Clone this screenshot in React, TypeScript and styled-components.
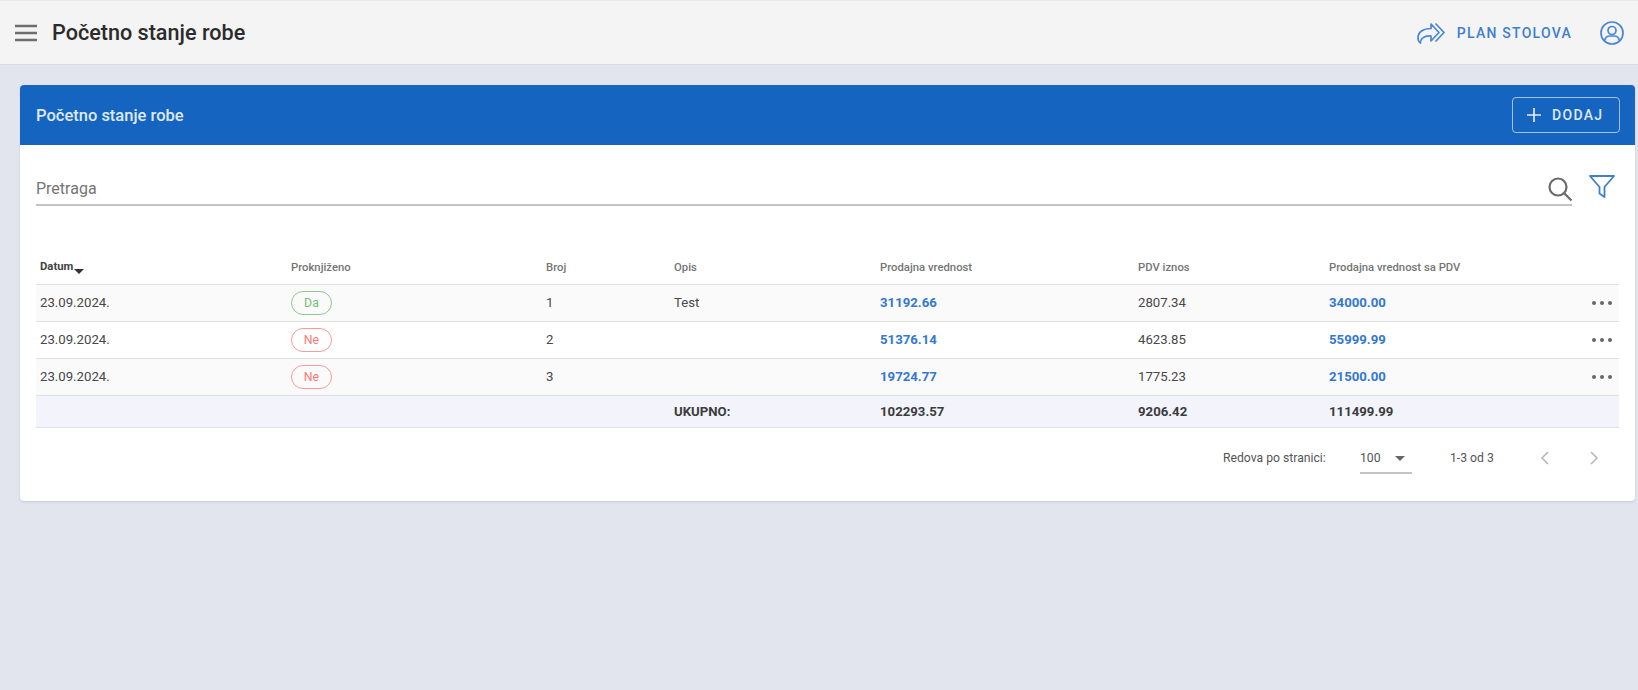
import styled, { createGlobalStyle } from "styled-components";

const GlobalStyle = createGlobalStyle`
  html, body {
    margin: 0;
    padding: 0;
    background: #e2e5ee;
    font-family: Roboto, "Liberation Sans", sans-serif;
  }
  * {
    box-sizing: border-box;
  }
`;

const rows = [
  { date: "23.09.2024.", booked: true, no: "1", desc: "Test", net: "31192.66", vat: "2807.34", gross: "34000.00" },
  { date: "23.09.2024.", booked: false, no: "2", desc: "", net: "51376.14", vat: "4623.85", gross: "55999.99" },
  { date: "23.09.2024.", booked: false, no: "3", desc: "", net: "19724.77", vat: "1775.23", gross: "21500.00" },
];

const columnWidths = [251, 255, 128, 206, 258, 191, 250, 44];

const App = () => {
  return (
    <>
      <GlobalStyle />
      <Page>
        <TopBar>
          <TopLeft>
            <MenuIcon viewBox="0 0 22 18">
              <path d="M0 2h22M0 9h22M0 16h22" />
            </MenuIcon>
            <PageTitle>Početno stanje robe</PageTitle>
          </TopLeft>
          <TopRight>
            <PlanLink>
              <svg width="28" height="22" viewBox="0 0 28 22" fill="none" stroke="#4a86d4" strokeWidth="1.7" strokeLinejoin="round" strokeLinecap="round">
                <path d="M14 2v4.500C6 6.500 1 10 1 16c0 2 1 4 2.500 5-.5-4 3-7.500 10.500-7v5l8-8.500z" />
                <path d="M19 2l8 8.500-8 8.500" />
              </svg>
              <PlanText>PLAN STOLOVA</PlanText>
            </PlanLink>
            <svg width="24" height="24" viewBox="0 0 24 24" fill="none" stroke="#4a86d4" strokeWidth="1.7">
              <circle cx="12" cy="12" r="11" />
              <circle cx="12" cy="9.500" r="4" />
              <path d="M4.500 20c.5-3.500 3-5 5.500-5h4c2.500 0 5 1.500 5.500 5" />
            </svg>
          </TopRight>
        </TopBar>
        <Content>
          <Card>
            <CardHeader>
              <CardTitle>Početno stanje robe</CardTitle>
              <AddButton>
                <svg width="14" height="14" viewBox="0 0 14 14" stroke="#e3ecf8" strokeWidth="1.700">
                  <path d="M7 0v14M0 7h14" />
                </svg>
                DODAJ
              </AddButton>
            </CardHeader>
            <CardBody>
              <SearchRow>
                <SearchField>
                  <SearchPlaceholder>Pretraga</SearchPlaceholder>
                  <SearchIcon viewBox="0 0 24 24">
                    <circle cx="10" cy="10" r="8.500" />
                    <path d="M16 16l7.500 7.500" />
                  </SearchIcon>
                </SearchField>
                <FilterIcon viewBox="0 0 26 26">
                  <path d="M1 2h24l-9.500 11v10l-5-3.500V13z" />
                </FilterIcon>
              </SearchRow>
              <Table>
                <colgroup>
                  {columnWidths.map((width, i) => (
                    <col key={i} width={width} />
                  ))}
                </colgroup>
                <thead>
                  <tr>
                    <HeadCell $active>
                      Datum
                      <SortArrow />
                    </HeadCell>
                    <HeadCell>Proknjiženo</HeadCell>
                    <HeadCell>Broj</HeadCell>
                    <HeadCell>Opis</HeadCell>
                    <HeadCell>Prodajna vrednost</HeadCell>
                    <HeadCell>PDV iznos</HeadCell>
                    <HeadCell>Prodajna vrednost sa PDV</HeadCell>
                    <HeadCell />
                  </tr>
                </thead>
                <tbody>
                  {rows.map((row) => (
                    <BodyRow key={row.no}>
                      <Cell>{row.date}</Cell>
                      <Cell>
                        <StatusPill $ok={row.booked}>{row.booked ? "Da" : "Ne"}</StatusPill>
                      </Cell>
                      <Cell>{row.no}</Cell>
                      <Cell>{row.desc}</Cell>
                      <AmountCell>{row.net}</AmountCell>
                      <Cell>{row.vat}</Cell>
                      <AmountCell>{row.gross}</AmountCell>
                      <ActionCell>
                        <Dots>
                          <Dot />
                          <Dot />
                          <Dot />
                        </Dots>
                      </ActionCell>
                    </BodyRow>
                  ))}
                </tbody>
                <tfoot>
                  <tr>
                    <FootCell />
                    <FootCell />
                    <FootCell />
                    <FootCell>UKUPNO:</FootCell>
                    <FootCell>102293.57</FootCell>
                    <FootCell>9206.42</FootCell>
                    <FootCell>111499.99</FootCell>
                    <FootCell />
                  </tr>
                </tfoot>
              </Table>
              <Pagination>
                <PageLabel>Redova po stranici:</PageLabel>
                <PageSelect>
                  100
                  <SelectArrow />
                </PageSelect>
                <PageRange>1-3 od 3</PageRange>
                <PageButtons>
                  <svg width="10" height="14" viewBox="0 0 10 14" fill="none" stroke="#b4b4b4" strokeWidth="1.500">
                    <path d="M8 1L2 7l6 6" />
                  </svg>
                  <svg width="10" height="14" viewBox="0 0 10 14" fill="none" stroke="#b4b4b4" strokeWidth="1.500">
                    <path d="M2 1l6 6-6 6" />
                  </svg>
                </PageButtons>
              </Pagination>
            </CardBody>
          </Card>
        </Content>
      </Page>
    </>
  );
};

const Page = styled.div`
  width: 1638px;
  height: 690px;
  overflow: hidden;
  background: #e2e5ee;
`;

const TopBar = styled.header`
  height: 65px;
  background: #f4f4f5;
  border-top: 1px solid #e9e9ec;
  border-bottom: 1px solid #d9dce6;
  display: flex;
  align-items: center;
  justify-content: space-between;
  padding: 0 14px 0 15px;
`;

const TopLeft = styled.div`
  display: flex;
  align-items: center;
  gap: 15px;
`;

const MenuIcon = styled.svg`
  width: 22px;
  height: 18px;
  fill: none;
  stroke: #6e6e6e;
  stroke-width: 2.6;
`;

const PageTitle = styled.h1`
  margin: 0;
  font-size: 21.6px;
  font-weight: 500;
  color: #2b2b2b;
`;

const TopRight = styled.div`
  display: flex;
  align-items: center;
  gap: 28px;
`;

const PlanLink = styled.div`
  display: flex;
  align-items: center;
  gap: 12px;
`;

const PlanText = styled.span`
  font-size: 14px;
  font-weight: 500;
  letter-spacing: 1.25px;
  color: #3f7fd0;
`;

const Content = styled.main`
  padding: 20px 3px 0 20px;
`;

const Card = styled.section`
  height: 416px;
  background: #fff;
  border-radius: 4px;
  overflow: hidden;
  box-shadow: 0 1px 2px rgba(60, 70, 110, 0.18);
`;

const CardHeader = styled.div`
  height: 60px;
  background: #1565c0;
  display: flex;
  align-items: center;
  justify-content: space-between;
  padding: 0 16px;
`;

const CardTitle = styled.h2`
  margin: 0;
  font-size: 16.5px;
  font-weight: 500;
  color: #dfe9f6;
`;

const AddButton = styled.button`
  width: 108px;
  height: 36px;
  display: flex;
  align-items: center;
  gap: 11px;
  margin-right: -1px;
  padding: 0 0 0 14px;
  background: transparent;
  border: 1.5px solid #a3c2e8;
  border-radius: 4px;
  color: #dfe9f6;
  font-family: inherit;
  font-size: 14px;
  font-weight: 500;
  letter-spacing: 1.3px;
`;

const CardBody = styled.div`
  padding: 0 16px;
`;

const SearchRow = styled.div`
  display: flex;
  align-items: flex-start;
  gap: 17px;
  padding: 29px 4px 0 0;
`;

const SearchField = styled.div`
  flex: 1;
  height: 32px;
  display: flex;
  align-items: flex-start;
  justify-content: space-between;
  border-bottom: 2px solid #c4c4c4;
`;

const SearchPlaceholder = styled.span`
  font-size: 16px;
  line-height: 30px;
  color: #757575;
`;

const SearchIcon = styled.svg`
  width: 24px;
  height: 24px;
  margin-top: 3px;
  fill: none;
  stroke: #6a6a6a;
  stroke-width: 2.2;
`;

const FilterIcon = styled.svg`
  width: 26px;
  height: 26px;
  fill: none;
  stroke: #3f7fd0;
  stroke-width: 1.8;
  stroke-linejoin: round;
`;

const Table = styled.table`
  width: 100%;
  margin-top: 46px;
  border-collapse: collapse;
  table-layout: fixed;
  font-size: 13.2px;
  color: #484848;
`;

const HeadCell = styled.th<{ $active?: boolean }>`
  height: 32px;
  padding: 0 0 1px 4px;
  text-align: left;
  font-size: 11.3px;
  font-weight: ${(p) => (p.$active ? 700 : 500)};
  color: ${(p) => (p.$active ? "#444" : "#757575")};
  border-bottom: 1px solid #e0e0e0;
  white-space: nowrap;
`;

const SortArrow = styled.span`
  display: inline-block;
  width: 0;
  height: 0;
  margin-left: 1px;
  vertical-align: -4px;
  border-left: 5px solid transparent;
  border-right: 5px solid transparent;
  border-top: 5px solid #333;
`;

const BodyRow = styled.tr`
  height: 37px;
  &:nth-child(odd) {
    background: #fafafa;
  }
`;

const Cell = styled.td`
  padding: 0 0 0 4px;
  border-bottom: 1px solid #e0e0e0;
`;

const AmountCell = styled(Cell)`
  font-weight: 700;
  color: #3478cf;
`;

const ActionCell = styled(Cell)`
  padding: 0 7px 0 0;
`;

const Dots = styled.div`
  display: flex;
  justify-content: flex-end;
  gap: 4px;
`;

const Dot = styled.span`
  display: block;
  width: 4px;
  height: 4px;
  border-radius: 50%;
  background: #666;
`;

const StatusPill = styled.span<{ $ok: boolean }>`
  display: flex;
  align-items: center;
  justify-content: center;
  width: 41px;
  height: 24px;
  border-radius: 12px;
  font-size: 12.3px;
  border: 1.5px solid ${(p) => (p.$ok ? "#8cc98e" : "#fb9a9a")};
  color: ${(p) => (p.$ok ? "#76bd79" : "#f77")};
`;

const FootCell = styled.td`
  height: 32px;
  padding: 0 0 0 4px;
  background: #f2f3fb;
  font-weight: 700;
  color: #3c3c3c;
  border-bottom: 1px solid #e0e0e0;
`;

const Pagination = styled.div`
  display: flex;
  align-items: flex-start;
  padding-top: 21px;
  padding-left: 1187px;
  font-size: 12.2px;
  color: #555;
`;

const PageLabel = styled.span`
  width: 137px;
  line-height: 18px;
`;

const PageSelect = styled.div`
  width: 52px;
  height: 25px;
  display: flex;
  justify-content: space-between;
  padding-right: 7px;
  line-height: 18px;
  border-bottom: 2px solid #c4c4c4;
`;

const SelectArrow = styled.span`
  width: 0;
  height: 0;
  margin-top: 7px;
  border-left: 5px solid transparent;
  border-right: 5px solid transparent;
  border-top: 5px solid #666;
`;

const PageRange = styled.span`
  width: 90px;
  margin-left: 38px;
  line-height: 18px;
`;

const PageButtons = styled.div`
  display: flex;
  gap: 39px;
  padding-top: 2px;
`;

export default App;
